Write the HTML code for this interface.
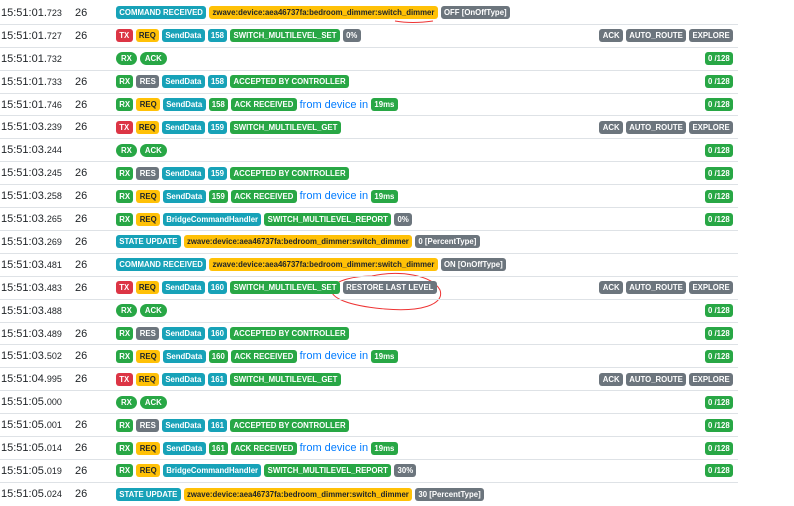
<!DOCTYPE html>
<html><head><meta charset="utf-8"><style>
*{margin:0;padding:0;box-sizing:border-box}
body{width:794px;height:505px;background:#fff;font-family:"Liberation Sans",Arial,sans-serif;overflow:hidden;position:relative}
.row{position:absolute;left:0;width:738px;height:22.9px;border-bottom:1px solid #dee2e6;display:flex;align-items:center}
.tm{position:absolute;left:1px;font-size:11px;color:#212529}
.tm small{font-size:9px}
.n{position:absolute;left:75px;font-size:11px;color:#212529}
.b{position:absolute;left:116px;display:flex;align-items:center;gap:3px}
.rt{position:absolute;right:5px;display:flex;gap:3px}
i{font-style:normal;display:inline-block;font-size:7.8px;font-weight:bold;color:#fff;padding:0 3.3px;height:13px;line-height:13px;border-radius:3px;white-space:nowrap}
.t{background:#17a2b8}.y{background:#ffc107;color:#212529}.r{background:#dc3545}.g{background:#28a745}.s{background:#6c757d}
.p{border-radius:7px;padding:0 5px}
.f{color:#007bff;font-size:11px}
</style></head><body>
<svg style="position:absolute;left:0;top:0" width="794" height="505"><path d="M395 21 Q412 24 433 21" stroke="#e33" fill="none" stroke-width="1"/><path d="M372 276 C400 270 432 275 440 290 C445 305 420 312 385 309 C350 306 328 298 332 288 C336 280 355 276 372 276" stroke="#e33" fill="none" stroke-width="1"/></svg>
<div id="c"></div>
<script>
const R=[
["01.","723","26",'<i class="t">COMMAND RECEIVED</i><i class="y">zwave:device:aea46737fa:bedroom_dimmer:switch_dimmer</i><i class="s">OFF [OnOffType]</i>',""],
["01.","727","26",'<i class="r">TX</i><i class="y">REQ</i><i class="t">SendData</i><i class="t">158</i><i class="g">SWITCH_MULTILEVEL_SET</i><i class="s">0%</i>',"e"],
["01.","732","",'<i class="g p">RX</i><i class="g p">ACK</i>',"k"],
["01.","733","26",'<i class="g">RX</i><i class="s">RES</i><i class="t">SendData</i><i class="t">158</i><i class="g">ACCEPTED BY CONTROLLER</i>',"k"],
["01.","746","26",'<i class="g">RX</i><i class="y">REQ</i><i class="t">SendData</i><i class="g">158</i><i class="g">ACK RECEIVED</i><span class="f">from device in</span><i class="g">19ms</i>',"k"],
["03.","239","26",'<i class="r">TX</i><i class="y">REQ</i><i class="t">SendData</i><i class="t">159</i><i class="g">SWITCH_MULTILEVEL_GET</i>',"e"],
["03.","244","",'<i class="g p">RX</i><i class="g p">ACK</i>',"k"],
["03.","245","26",'<i class="g">RX</i><i class="s">RES</i><i class="t">SendData</i><i class="t">159</i><i class="g">ACCEPTED BY CONTROLLER</i>',"k"],
["03.","258","26",'<i class="g">RX</i><i class="y">REQ</i><i class="t">SendData</i><i class="g">159</i><i class="g">ACK RECEIVED</i><span class="f">from device in</span><i class="g">19ms</i>',"k"],
["03.","265","26",'<i class="g">RX</i><i class="y">REQ</i><i class="t">BridgeCommandHandler</i><i class="g">SWITCH_MULTILEVEL_REPORT</i><i class="s">0%</i>',"k"],
["03.","269","26",'<i class="t">STATE UPDATE</i><i class="y">zwave:device:aea46737fa:bedroom_dimmer:switch_dimmer</i><i class="s">0 [PercentType]</i>',""],
["03.","481","26",'<i class="t">COMMAND RECEIVED</i><i class="y">zwave:device:aea46737fa:bedroom_dimmer:switch_dimmer</i><i class="s">ON [OnOffType]</i>',""],
["03.","483","26",'<i class="r">TX</i><i class="y">REQ</i><i class="t">SendData</i><i class="t">160</i><i class="g">SWITCH_MULTILEVEL_SET</i><i class="s">RESTORE LAST LEVEL</i>',"e"],
["03.","488","",'<i class="g p">RX</i><i class="g p">ACK</i>',"k"],
["03.","489","26",'<i class="g">RX</i><i class="s">RES</i><i class="t">SendData</i><i class="t">160</i><i class="g">ACCEPTED BY CONTROLLER</i>',"k"],
["03.","502","26",'<i class="g">RX</i><i class="y">REQ</i><i class="t">SendData</i><i class="g">160</i><i class="g">ACK RECEIVED</i><span class="f">from device in</span><i class="g">19ms</i>',"k"],
["04.","995","26",'<i class="r">TX</i><i class="y">REQ</i><i class="t">SendData</i><i class="t">161</i><i class="g">SWITCH_MULTILEVEL_GET</i>',"e"],
["05.","000","",'<i class="g p">RX</i><i class="g p">ACK</i>',"k"],
["05.","001","26",'<i class="g">RX</i><i class="s">RES</i><i class="t">SendData</i><i class="t">161</i><i class="g">ACCEPTED BY CONTROLLER</i>',"k"],
["05.","014","26",'<i class="g">RX</i><i class="y">REQ</i><i class="t">SendData</i><i class="g">161</i><i class="g">ACK RECEIVED</i><span class="f">from device in</span><i class="g">19ms</i>',"k"],
["05.","019","26",'<i class="g">RX</i><i class="y">REQ</i><i class="t">BridgeCommandHandler</i><i class="g">SWITCH_MULTILEVEL_REPORT</i><i class="s">30%</i>',"k"],
["05.","024","26",'<i class="t">STATE UPDATE</i><i class="y">zwave:device:aea46737fa:bedroom_dimmer:switch_dimmer</i><i class="s">30 [PercentType]</i>',""]
];
let h="";
R.forEach((r,k)=>{
let rt=r[4]=="e"?'<i class="s">ACK</i><i class="s">AUTO_ROUTE</i><i class="s">EXPLORE</i>':r[4]=="k"?'<i class="g">0 /128</i>':"";
h+=`<div class="row" style="top:${(2+k*22.9).toFixed(1)}px${k==21?';border-bottom:none':''}"><span class="tm">15:51:${r[0]}<small>${r[1]}</small></span><span class="n">${r[2]}</span><span class="b">${r[3]}</span><span class="rt">${rt}</span></div>`;
});
document.getElementById("c").innerHTML=h;
</script>
</body></html>
